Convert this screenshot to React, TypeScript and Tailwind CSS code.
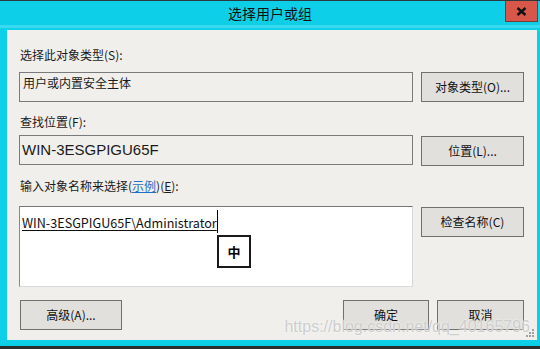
const font = { fontFamily: '"Noto Sans CJK SC", "Noto Sans", sans-serif' };

function Btn({ label, className = "" }: { label: string; className?: string }) {
  return (
    <div
      className={`flex items-center justify-center h-[30px] border border-[#707070] bg-[#e1e0dc] text-[12px] text-[#111] ${className}`}
    >
      {label}
    </div>
  );
}

export default function App() {
  return (
    <div
      className="w-[540px] h-[349px] bg-[#0dcfe8] border-t border-t-[#2b3a3e] border-b-[3px] border-b-[#2b2f30] flex flex-col overflow-hidden"
      style={font}
    >
      {/* Title bar */}
      <div className="relative h-[29px] shrink-0">
        <div className="h-[24px] flex items-center justify-center text-[14px] text-[#111]">
          选择用户或组
        </div>
        <div className="h-[3px] bg-[#3ad9ef]" />
        <div className="absolute top-0 right-[2px] w-[33px] h-[21px] bg-[#d9564b] border border-[#7a3a34] border-t-0 flex items-center justify-center">
          <svg width="11" height="9" viewBox="0 0 11 9">
            <path d="M1.5 1 L9.5 8 M9.5 1 L1.5 8" stroke="#111" strokeWidth="2.4" />
          </svg>
        </div>
      </div>

      {/* Client area */}
      <div className="relative ml-[7px] mr-[3px] h-[310px] shrink-0 bg-[#f0efec] text-[12px] text-[#1a1a1a] leading-[16px] pt-[17px] pl-[12px] pr-[13px]">
        <div className="pl-[1px]">选择此对象类型(S):</div>
        <div className="flex gap-[8px] mt-[9px]">
          <div className="w-[394px] h-[30px] border border-[#7a7a7a] px-[3px] pt-[2px]">用户或内置安全主体</div>
          <Btn label="对象类型(O)..." className="w-[103px]" />
        </div>

        <div className="pl-[1px] mt-[12px]">查找位置(F):</div>
        <div className="flex gap-[8px] mt-[5px]">
          <div
            className="w-[394px] h-[30px] border border-[#7a7a7a] px-[2px] flex items-center text-[15px] text-[#1a1a1a]"
            style={{ fontFamily: '"Liberation Sans", Arial, sans-serif' }}
          >
            WIN-3ESGPIGU65F
          </div>
          <Btn label="位置(L)..." className="w-[103px] mt-[1px]" />
        </div>

        <div className="pl-[1px] mt-[12px]">
          输入对象名称来选择(<span className="text-[#1e6fc8] underline">示例</span>)(<span className="underline">E</span>):
        </div>
        <div className="flex gap-[8px] mt-[12px]">
          <div className="relative w-[394px] h-[81px] bg-white border border-t-[#777] border-l-[#888] border-r-[#d8d8d8] border-b-[#dcdcdc] pt-[8px] pl-[2px]">
            <span className="underline underline-offset-[2px] text-[12.6px] text-[#111]">WIN-3ESGPIGU65F\Administrator</span>
            <span className="inline-block align-top w-px h-[23px] bg-black -mt-[5px]" />
            <div className="absolute left-[197px] top-[28px] w-[34px] h-[33px] border-2 border-[#1a1a1a] bg-white flex items-center justify-center text-[13px] font-bold text-black">
              中
            </div>
          </div>
          <Btn label="检查名称(C)" className="w-[103px] mt-[1px]" />
        </div>

        <div className="flex mt-[13px] ml-[1px]">
          <Btn label="高级(A)..." className="w-[102px]" />
          <div className="flex-1" />
          <Btn label="确定" className="w-[86px]" />
          <Btn label="取消" className="w-[87px] ml-[8px]" />
        </div>

        {/* watermark */}
        <div
          className="absolute right-[7px] bottom-[3px] text-[16px] leading-[20px] text-[#cdcdcd]"
          style={{ fontFamily: '"Liberation Sans", Arial, sans-serif', textShadow: "0 0 2px #fff" }}
        >
          https://blog.csdn.net/qq_40165796
        </div>
        {/* size grip */}
        <svg className="absolute right-[2px] bottom-[2px]" width="10" height="10" viewBox="0 0 10 10">
          <g fill="#a0a0a0">
            <rect x="7" y="1" width="2" height="2" />
            <rect x="4" y="4" width="2" height="2" />
            <rect x="7" y="4" width="2" height="2" />
            <rect x="1" y="7" width="2" height="2" />
            <rect x="4" y="7" width="2" height="2" />
            <rect x="7" y="7" width="2" height="2" />
          </g>
        </svg>
      </div>
    </div>
  );
}
